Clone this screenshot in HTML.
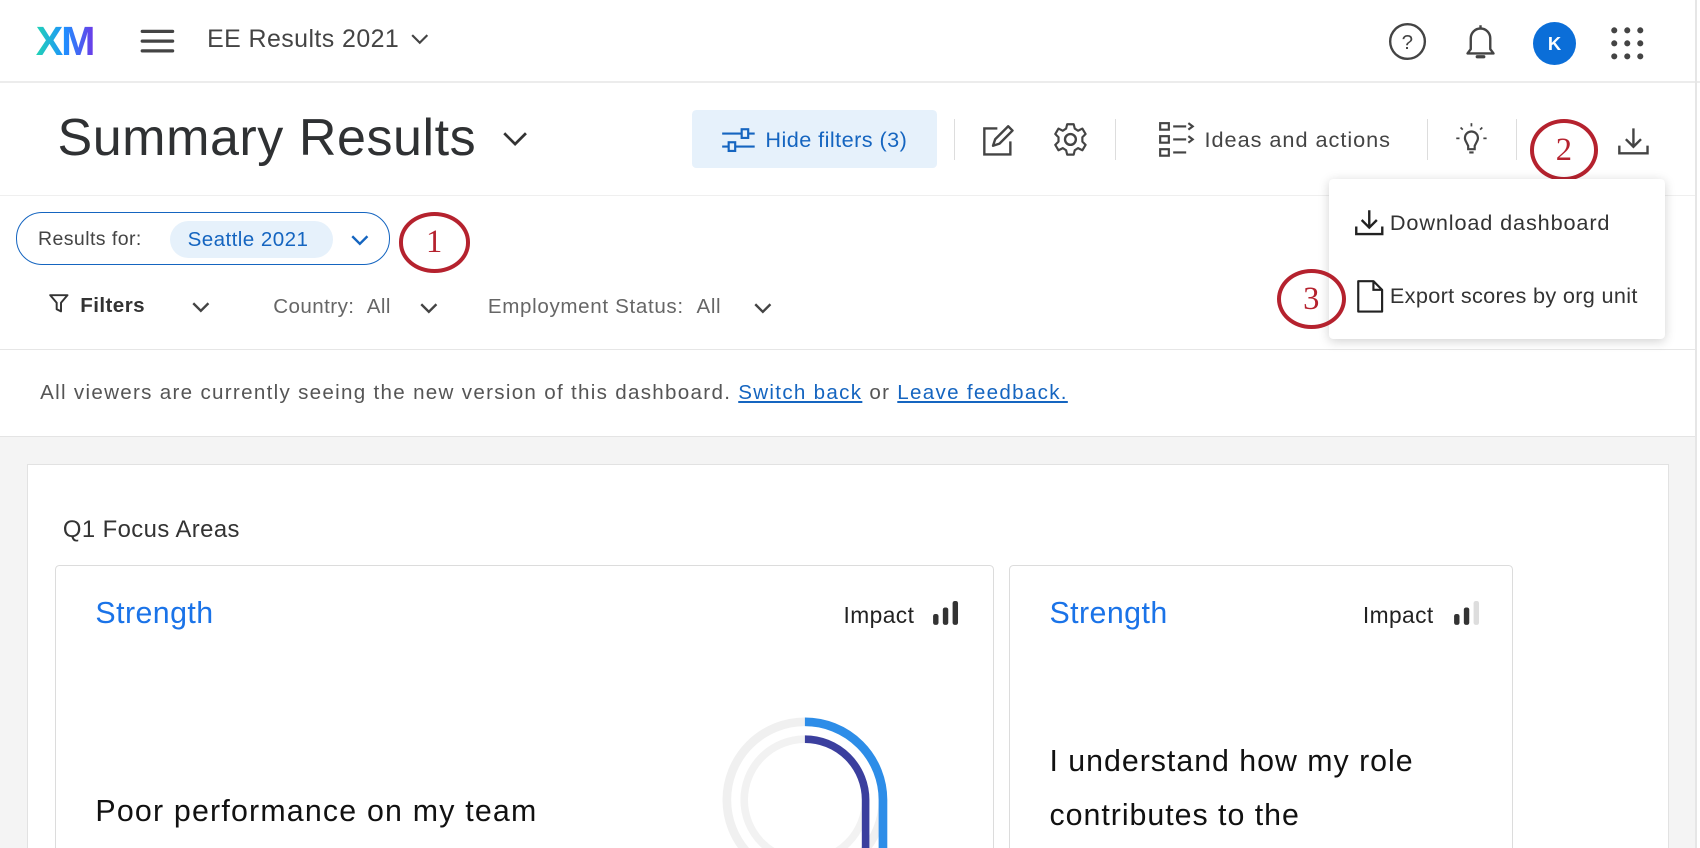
<!DOCTYPE html>
<html><head><style>
html,body{margin:0;padding:0;width:1700px;height:848px;overflow:hidden;background:#fff}
#w{zoom:1.08418;width:1568px;height:782px;position:relative;font-family:"Liberation Sans",sans-serif;color:#333;overflow:hidden;letter-spacing:0.4px}
.a{position:absolute;white-space:nowrap}
.circ{position:absolute;border:4px solid #b5222e;border-radius:50%;color:#b5222e;font-size:30px;text-align:center;font-family:"Liberation Serif",serif}
svg{position:absolute}
.lnk{color:#1565c0;text-decoration:underline}
</style></head><body><div id="w">
<div class="a" style="left:33px;top:17px;font-size:38px;font-weight:bold;letter-spacing:-2px;background:linear-gradient(90deg,#21d4b4,#1e90ff 50%,#6a3de8);-webkit-background-clip:text;color:transparent">XM</div>
<svg style="left:128px;top:24px" width="34" height="28"><g stroke="#444" stroke-width="3" stroke-linecap="round"><line x1="3" y1="5" x2="31" y2="5"/><line x1="3" y1="14" x2="31" y2="14"/><line x1="3" y1="23" x2="31" y2="23"/></g></svg>
<div class="a" style="left:191px;top:23px;font-size:23px;color:#444">EE Results 2021</div>
<svg style="left:378px;top:30px" width="18" height="12"><path d="M2 2l7 7 7-7" stroke="#444" stroke-width="2" fill="none"/></svg>
<svg style="left:1280px;top:20px" width="36" height="36"><circle cx="18" cy="18" r="16" stroke="#444" stroke-width="2.2" fill="none"/><text x="18" y="25" font-size="19" text-anchor="middle" fill="#444" font-family="Liberation Sans">?</text></svg>
<svg style="left:1348px;top:20px" width="36" height="38"><path d="M6 29h24l-3-4V15a9 9 0 0 0-18 0v10z" stroke="#444" stroke-width="2.2" fill="none" stroke-linejoin="round"/><path d="M15 32h6" stroke="#444" stroke-width="3" stroke-linecap="round"/><path d="M18 3v3" stroke="#444" stroke-width="2.2"/></svg>
<div class="a" style="left:1414px;top:20px;width:40px;height:40px;border-radius:50%;background:#0b6ed8;color:#fff;font-size:17px;font-weight:bold;text-align:center;line-height:40px">K</div>
<svg style="left:1486px;top:24px" width="32" height="32"><g fill="#444"><circle cx="3" cy="4" r="2.8"/><circle cx="15" cy="4" r="2.8"/><circle cx="27" cy="4" r="2.8"/><circle cx="3" cy="16" r="2.8"/><circle cx="15" cy="16" r="2.8"/><circle cx="27" cy="16" r="2.8"/><circle cx="3" cy="28" r="2.8"/><circle cx="15" cy="28" r="2.8"/><circle cx="27" cy="28" r="2.8"/></g></svg>
<div class="a" style="left:0;top:75px;width:1568px;height:2px;background:#ececec"></div>
<div class="a" style="left:1563px;top:0;width:2px;height:782px;background:#e6e6e6"></div>
<div class="a" style="left:53px;top:100px;font-size:48px;color:#2f3133;letter-spacing:0.5px">Summary Results</div>
<svg style="left:462px;top:120px" width="26" height="16"><path d="M3 3l10 10 10-10" stroke="#333" stroke-width="2.5" fill="none"/></svg>
<div class="a" style="left:638px;top:101px;width:226px;height:54px;background:#e6f1fb;border-radius:4px"></div>
<svg style="left:664px;top:116px" width="34" height="26"><g stroke="#1565c0" stroke-width="2" fill="none"><line x1="2" y1="7" x2="32" y2="7"/><line x1="2" y1="19" x2="32" y2="19"/><rect x="20" y="3" width="6" height="8" fill="#e6f1fb"/><rect x="8" y="15" width="6" height="8" fill="#e6f1fb"/></g></svg>
<div class="a" style="left:706px;top:117px;font-size:20px;color:#1565c0">Hide filters (3)</div>
<div class="a" style="left:880px;top:110px;width:1px;height:38px;background:#ddd"></div>
<svg style="left:904px;top:113px" width="32" height="32"><path d="M16 5H4v24h24V17" stroke="#444" stroke-width="2.2" fill="none"/><path d="M12 21l2-6L26 3l4 4-12 12z" stroke="#444" stroke-width="2.2" fill="none" stroke-linejoin="round"/></svg>
<svg style="left:970px;top:112px" width="34" height="34"><circle cx="17" cy="17" r="5" stroke="#444" stroke-width="2.2" fill="none"/><path d="M14 3h6l1 4 3 2 4-2 3 5-3 3v4l3 3-3 5-4-2-3 2-1 4h-6l-1-4-3-2-4 2-3-5 3-3v-4l-3-3 3-5 4 2 3-2z" stroke="#444" stroke-width="2" fill="none" stroke-linejoin="round"/></svg>
<div class="a" style="left:1028px;top:110px;width:1px;height:38px;background:#ddd"></div>
<svg style="left:1068px;top:112px" width="36" height="34"><g stroke="#444" stroke-width="2" fill="none"><rect x="2" y="2" width="8" height="6"/><rect x="2" y="14" width="8" height="6"/><rect x="2" y="26" width="8" height="6"/><line x1="14" y1="5" x2="26" y2="5"/><line x1="14" y1="17" x2="26" y2="17"/><line x1="14" y1="29" x2="26" y2="29"/><path d="M28 2l4 3-4 3M28 14l4 3-4 3"/></g></svg>
<div class="a" style="left:1111px;top:117px;font-size:20px;color:#444;letter-spacing:0.9px">Ideas and actions</div>
<div class="a" style="left:1316px;top:110px;width:1px;height:38px;background:#ddd"></div>
<svg style="left:1340px;top:112px" width="36" height="36"><path d="M12 19a6 6 0 1 1 10 0l-2 4v3h-6v-3z" stroke="#444" stroke-width="2" fill="none"/><path d="M15 29h4" stroke="#444" stroke-width="2"/><g stroke="#444" stroke-width="1.6"><line x1="17" y1="2" x2="17" y2="5"/><line x1="7" y1="6" x2="9" y2="8"/><line x1="27" y1="6" x2="25" y2="8"/><line x1="3" y1="16" x2="6" y2="16"/><line x1="28" y1="16" x2="31" y2="16"/></g></svg>
<div class="a" style="left:1398px;top:110px;width:1px;height:38px;background:#ddd"></div>
<div class="circ" style="left:1411px;top:110px;width:56px;height:50px;line-height:50px">2</div>
<svg style="left:1490px;top:114px" width="34" height="32"><path d="M17 4v17M10 14l7 7 7-7M4 20v7h26v-7" stroke="#444" stroke-width="2.2" fill="none"/></svg>
<div class="a" style="left:0;top:180px;width:1563px;height:1px;background:#efefef"></div>
<div class="a" style="left:15px;top:196px;width:343px;height:47px;border:1px solid #1565c0;border-radius:24px"></div>
<div class="a" style="left:35px;top:210px;font-size:18px;color:#444">Results for:</div>
<div class="a" style="left:157px;top:204px;width:150px;height:34px;background:#e6f1fb;border-radius:17px"></div>
<div class="a" style="left:173px;top:210px;font-size:19px;color:#1565c0">Seattle 2021</div>
<svg style="left:322px;top:215px" width="20" height="12"><path d="M3 3l7 7 7-7" stroke="#1565c0" stroke-width="2.2" fill="none"/></svg>
<div class="circ" style="left:368px;top:196px;width:58px;height:48px;line-height:48px">1</div>
<svg style="left:44px;top:270px" width="20" height="20"><path d="M2 2h16l-6 7v8l-4-2V9z" stroke="#333" stroke-width="1.8" fill="none" stroke-linejoin="round"/></svg>
<div class="a" style="left:74px;top:271px;font-size:19px;font-weight:bold;color:#333">Filters</div>
<svg style="left:175px;top:277px" width="20" height="12"><path d="M3 3l7 7 7-7" stroke="#444" stroke-width="2.2" fill="none"/></svg>
<div class="a" style="left:252px;top:272px;font-size:19px;color:#666">Country: &nbsp;All</div>
<svg style="left:386px;top:278px" width="20" height="12"><path d="M3 3l7 7 7-7" stroke="#444" stroke-width="2.2" fill="none"/></svg>
<div class="a" style="left:450px;top:272px;font-size:19px;color:#666;letter-spacing:0.6px">Employment Status: &nbsp;All</div>
<svg style="left:694px;top:278px" width="20" height="12"><path d="M3 3l7 7 7-7" stroke="#444" stroke-width="2.2" fill="none"/></svg>
<div class="a" style="left:0;top:322px;width:1563px;height:1px;background:#e6e6e6"></div>
<div class="a" style="left:37px;top:351px;font-size:19px;color:#555;letter-spacing:1.2px">All viewers are currently seeing the new version of this dashboard. <span class="lnk">Switch back</span> or <span class="lnk">Leave feedback.</span></div>
<div class="a" style="left:0;top:402px;width:1563px;height:380px;background:#f4f4f4;border-top:1px solid #e4e4e4"></div>
<div class="a" style="left:25px;top:428px;width:1513px;height:360px;background:#fff;border:1px solid #e2e2e2"></div>
<div class="a" style="left:58px;top:476px;font-size:22px;color:#333">Q1 Focus Areas</div>
<div class="a" style="left:51px;top:521px;width:864px;height:270px;border:1px solid #dcdcdc;border-radius:4px"></div>
<div class="a" style="left:88px;top:551px;font-size:28px;color:#1a73e8">Strength</div>
<div class="a" style="left:778px;top:555px;font-size:21px;color:#222">Impact</div>
<svg style="left:860px;top:554px" width="28" height="24"><rect x="1" y="12" width="5" height="10" rx="2" fill="#333"/><rect x="10" y="6" width="5" height="16" rx="2" fill="#333"/><rect x="19" y="0" width="5" height="22" rx="2" fill="#333"/></svg>
<div class="a" style="left:88px;top:733px;font-size:28px;color:#111;letter-spacing:1.1px">Poor performance on my team</div>
<svg style="left:660px;top:656px" width="170" height="130"><circle cx="82" cy="82" r="72" stroke="#f0f0f0" stroke-width="8" fill="none"/><path d="M82 10a72 72 0 0 1 72 72v50" stroke="#2d8de8" stroke-width="8" fill="none"/><circle cx="82" cy="82" r="56" stroke="#f2f2f2" stroke-width="7" fill="none"/><path d="M82 26a56 56 0 0 1 56 56v50" stroke="#3b3f9e" stroke-width="7" fill="none"/></svg>
<div class="a" style="left:931px;top:521px;width:463px;height:270px;border:1px solid #dcdcdc;border-radius:4px"></div>
<div class="a" style="left:968px;top:551px;font-size:28px;color:#1a73e8">Strength</div>
<div class="a" style="left:1257px;top:555px;font-size:21px;color:#222">Impact</div>
<svg style="left:1340px;top:554px" width="28" height="24"><rect x="1" y="12" width="5" height="10" rx="2" fill="#333"/><rect x="10" y="6" width="5" height="16" rx="2" fill="#333"/><rect x="19" y="0" width="5" height="22" rx="2" fill="#ddd"/></svg>
<div class="a" style="left:968px;top:678px;font-size:28px;color:#111;line-height:50px;letter-spacing:0.9px">I understand how my role<br>contributes to the</div>
<div class="a" style="left:1226px;top:165px;width:310px;height:148px;background:#fff;border-radius:4px;box-shadow:0 2px 10px rgba(0,0,0,.18)"></div>
<svg style="left:1248px;top:191px" width="30" height="28"><path d="M15 3v16M8 12l7 7 7-7M3 18v7h24v-7" stroke="#222" stroke-width="2.2" fill="none"/></svg>
<div class="a" style="left:1282px;top:194px;font-size:20px;color:#333;letter-spacing:0.8px">Download dashboard</div>
<svg style="left:1250px;top:257px" width="28" height="32"><path d="M3 2h14l8 8v20H3z" stroke="#222" stroke-width="2" fill="none" stroke-linejoin="round"/><path d="M17 2v8h8" stroke="#222" stroke-width="2" fill="none"/></svg>
<div class="a" style="left:1282px;top:261px;font-size:20px;color:#333;letter-spacing:0.3px">Export scores by org unit</div>
<div class="circ" style="left:1178px;top:248px;width:56px;height:48px;line-height:48px">3</div>
</div></body></html>
